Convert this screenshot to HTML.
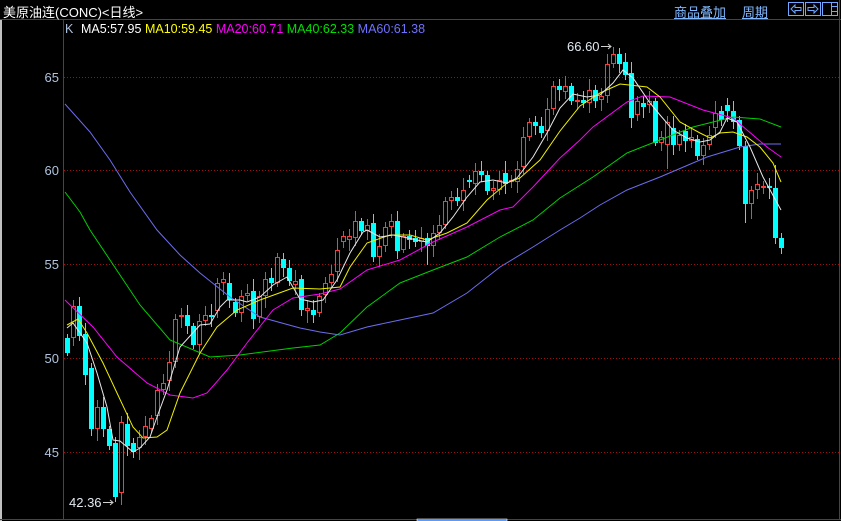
<!DOCTYPE html>
<html><head><meta charset="utf-8">
<style>
html,body{margin:0;padding:0;background:#000;width:841px;height:521px;overflow:hidden}
body{position:relative;font-family:"Liberation Sans","Noto Sans CJK SC",sans-serif}
.t{position:absolute;white-space:nowrap}
</style></head><body>
<svg id="s" width="841" height="521" style="position:absolute;left:0;top:0" xmlns="http://www.w3.org/2000/svg">
<rect x="0" y="20" width="2" height="501" fill="#c0c0c0"/>
<line x1="0" y1="19.5" x2="841" y2="19.5" stroke="#c01010"/>
<line x1="63.5" y1="20" x2="63.5" y2="519" stroke="#c01010"/>
<line x1="839.5" y1="0" x2="839.5" y2="519" stroke="#c01010"/>
<line x1="0" y1="519.5" x2="841" y2="519.5" stroke="#c01010"/>
<rect x="417" y="519" width="90" height="2" fill="#1070ff" stroke="#fff" stroke-width="0.6"/>
<g stroke="#a01010" stroke-dasharray="1,2">
<line x1="64" y1="77.5" x2="839" y2="77.5"/>
<line x1="64" y1="170.5" x2="839" y2="170.5"/>
<line x1="64" y1="264.5" x2="839" y2="264.5"/>
<line x1="64" y1="358.5" x2="839" y2="358.5"/>
<line x1="64" y1="452.5" x2="839" y2="452.5"/>
</g>
<g font-family="Liberation Sans" font-size="13" fill="#b0c4de" text-anchor="end">
<text x="59" y="82">65</text><text x="59" y="175">60</text><text x="59" y="269">55</text><text x="59" y="363">50</text><text x="59" y="457">45</text>
</g>
<g id="c"></g>
<g fill="none" stroke-width="1">
<polyline stroke="#6c6cf0" points="65,104 90,132 110,160 130,192 157,230 180,255 200,273 230,297 260,317 300,328 320,332 340,335 367,327 400,320 433,313 467,293 500,267 533,247 560,230 580,218 600,205 627,190 660,177 707,157 740,147 760,144 781,144"/>
<polyline stroke="#00d000" points="65,192 80,212 90,230 110,260 140,305 170,340 210,357 240,355 293,348 320,345 340,333 367,307 400,283 433,270 467,257 500,237 533,220 560,198 593,177 627,153 660,140 693,127 733,117 760,119 781,127"/>
<polyline stroke="#ff00ff" points="65,300 67,302 93,327 117,357 147,383 170,395 193,398 207,393 227,370 247,343 273,310 293,298 320,294 340,289 367,270 400,260 433,242 467,227 500,210 513,207 533,187 560,158 580,140 593,127 627,102 643,96 670,97 703,110 733,118 747,130 767,147 781,157"/>
<polyline stroke="#f0f000" points="67,325 78,319 87,333 103,363 117,393 133,427 143,438 157,437 167,430 180,393 200,353 217,327 237,310 260,300 293,288 320,289 340,287 350,267 367,243 390,235 410,235 427,240 447,233 467,223 487,200 507,183 520,178 540,160 560,131 580,106 600,93 620,84 647,87 660,97 680,122 700,133 710,138 720,133 733,132 747,137 760,147 773,163 781,182"/>
<polyline stroke="#e8e8e8" points="67,328 73,323 87,343 97,373 107,407 113,440 120,441 133,452 140,448 150,437 157,417 167,390 180,347 200,325 210,324 220,307 227,300 240,300 247,302 260,297 273,285 287,277 300,299 313,302 323,300 337,280 350,253 363,232 367,230 380,237 393,235 403,237 417,240 427,242 440,233 453,217 467,197 480,182 493,180 507,183 517,178 533,157 547,133 560,108 573,94 587,97 600,95 613,83 623,70 633,78 650,103 660,115 673,130 687,138 700,142 710,140 720,132 727,118 737,122 750,147 763,177 781,210"/>
</g>
<g font-family="Liberation Sans" font-size="13" fill="#e0e8f0">
<text x="567" y="51">66.60</text><text x="69" y="507">42.36</text>
</g>
<g stroke="#d0d0d0" fill="none">
<line x1="601" y1="46.5" x2="611" y2="46.5"/><polyline points="608,44 611,46.5 608,49"/>
<line x1="103" y1="502.5" x2="113" y2="502.5"/><polyline points="110,500 113,502.5 110,505"/>
</g>
<g stroke="#70a8ff" fill="none">
<rect x="788.5" y="2.5" width="15" height="13"/><rect x="805.5" y="2.5" width="15" height="13"/><rect x="822.5" y="2.5" width="15" height="13"/>
<path d="M791 9 L795 5 L795 7.5 L801 7.5 L801 10.5 L795 10.5 L795 13 Z"/>
<path d="M818 9 L814 5 L814 7.5 L808 7.5 L808 10.5 L814 10.5 L814 13 Z"/>
<path d="M831.5 3 V15 M832 6.5 H837 M832 11.5 H837"/>
</g>
</svg>
<div class="t" style="left:3px;top:2px;font-size:13px;color:#fff;">美原油连(CONC)&lt;日线&gt;</div>
<div class="t" style="left:674px;top:2px;font-size:13px;color:#80b8ff;text-decoration:underline">商品叠加</div>
<div class="t" style="left:742px;top:2px;font-size:13px;color:#80b8ff;text-decoration:underline">周期</div>
<div class="t" style="left:65px;top:22px;font-size:12.5px;color:#b0c4de">K</div>
<div class="t" style="left:81px;top:22px;font-size:12.5px;"><span style="color:#fff">MA5:57.95</span> <span style="color:#ffff00">MA10:59.45</span> <span style="color:#ff00ff">MA20:60.71</span> <span style="color:#00e000">MA40:62.33</span> <span style="color:#7070ff">MA60:61.38</span></div>
<script>
var d=[[51.1,50.3],[51.1,52.8],[52.8,51.2],[51.3,49.1],[49.5,46.2],[46.2,47.4],[47.4,46.2],[46.2,45.3],[45.5,42.6,0.3,0.25],[42.8,46.6,0.3,0.6],[46.5,45.3],[45.5,45.0],[45.2,45.8],[45.8,46.4],[46.2,46.8],[46.9,48.3],[48.3,48.7],[48.8,49.8],[49.8,52.1],[52.2,52.3],[52.3,51.7],[51.7,50.7],[50.7,52.0],[52.0,52.3],[52.3,52.2],[52.5,54.0],[54.0,54.2],[54.0,53.1],[53.0,52.4],[52.4,53.3],[53.3,53.5],[53.6,52.1],[52.2,53.3],[53.3,54.2],[54.3,54.0],[54.0,55.4],[55.3,54.8],[54.8,54.1],[53.9,54.1],[54.2,52.6],[52.5,52.7],[52.6,52.3],[52.4,53.3],[53.4,54.0],[54.0,54.5],[54.6,55.8],[56.2,56.5],[56.3,56.5],[56.4,57.3],[57.3,56.8],[56.8,57.1],[57.2,55.4],[55.4,56.0],[56.0,57.0],[57.0,57.3],[57.3,55.7],[55.8,56.5],[56.5,56.3],[56.4,56.2],[56.2,56.4],[56.4,56.0,0.3,1.0],[56.0,56.7],[56.7,57.1],[57.1,58.4],[58.4,58.6],[58.6,58.4],[58.4,59.0],[59.5,59.4],[59.3,60.0],[60.0,59.8],[59.8,58.9],[58.9,59.1],[59.0,59.5],[59.9,59.3],[59.4,59.5],[59.4,60.1],[60.2,61.8],[61.8,62.6],[62.6,62.4],[62.4,62.0],[62.1,63.3],[63.3,64.5],[64.5,64.3],[64.2,64.5],[64.5,63.7],[63.7,63.8],[63.8,63.6],[63.6,64.3],[64.3,63.7],[63.8,64.0],[64.0,65.7],[65.7,66.2,0.4,0.2],[66.2,65.7],[65.8,65.1],[65.2,62.8],[63.0,63.7],[63.6,63.4],[63.5,63.7],[63.7,61.5],[61.5,61.8],[61.4,62.6,0.3,1.3],[62.3,61.4],[61.4,61.9],[62.1,61.6],[61.6,61.8],[61.7,60.8],[60.8,61.4],[61.4,61.9],[62.3,63.1],[63.2,62.7],[63.5,63.2],[63.2,62.6],[62.7,61.3],[61.3,58.2,0.3,1.0],[58.2,59.0,0.2,0.8],[59.0,59.3],[59.1,59.2],[59.2,59.1],[59.1,56.4,1.2,0.3],[56.4,55.9,0.3,0.35]];
function Y(p){return 77+(65-p)*18.75;}
var s='';
for(var i=0;i<d.length;i++){
 var o=d[i][0],c=d[i][1],hu=d[i][2]!=null?d[i][2]:0.2+((i*37)%7)/15,ld=d[i][3]!=null?d[i][3]:0.2+((i*53)%7)/15;
 var x=67+6*i,hi=Math.max(o,c)+hu,lo=Math.min(o,c)-ld;
 var yt=Math.round(Y(Math.max(o,c))),yb=Math.round(Y(Math.min(o,c)));if(yb-yt<1)yb=yt+1;
 var yh=Math.round(Y(hi)),yl=Math.round(Y(lo));
 if(c>o){
  s+='<line x1="'+(x+.5)+'" y1="'+yh+'" x2="'+(x+.5)+'" y2="'+yt+'" stroke="#ff3a3a"/>';
  s+='<line x1="'+(x+.5)+'" y1="'+yb+'" x2="'+(x+.5)+'" y2="'+yl+'" stroke="#ff3a3a"/>';
  s+='<rect x="'+(x-1.5)+'" y="'+(yt+.5)+'" width="4" height="'+Math.max(1,yb-yt-1)+'" fill="none" stroke="#ff3a3a"/>';
 }else{
  s+='<line x1="'+(x+.5)+'" y1="'+yh+'" x2="'+(x+.5)+'" y2="'+yl+'" stroke="#00ffff"/>';
  s+='<rect x="'+(x-2)+'" y="'+yt+'" width="5" height="'+(yb-yt)+'" fill="#00ffff"/>';
 }
}
document.getElementById('c').innerHTML=s;
</script>
</body></html>
